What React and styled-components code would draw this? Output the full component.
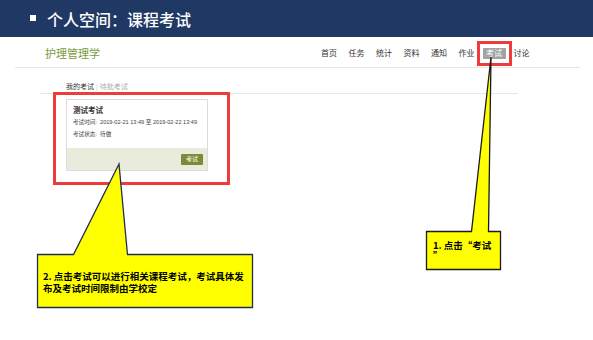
import styled, { createGlobalStyle } from "styled-components";

const GlobalStyle = createGlobalStyle`
  html, body {
    margin: 0;
    padding: 0;
    background: #fff;
  }
  body {
    font-family: "Liberation Sans", "Noto Sans CJK SC", sans-serif;
    color: #333;
  }
`;

const Page = styled.div`
  position: relative;
  width: 593px;
  height: 340px;
  overflow: hidden;
  background: #fff;
`;

const Header = styled.header`
  height: 37px;
  background: #1f3864;
  display: flex;
  align-items: center;
  padding-left: 30px;
  gap: 11px;
  box-sizing: border-box;
`;

const Bullet = styled.span`
  width: 6px;
  height: 6px;
  background: #fff;
  margin-top: -1px;
`;

const Title = styled.h1`
  margin: 0;
  font-size: 16px;
  font-weight: 500;
  color: #fff;
  font-family: "Noto Sans CJK SC", sans-serif;
`;

const NavBar = styled.nav`
  height: 31px;
  margin: 0 13px 0 15px;
  padding: 0 47px 0 30px;
  display: flex;
  align-items: center;
  justify-content: space-between;
  border-bottom: 1px solid #e6e6e6;
  box-sizing: border-box;
`;

const Brand = styled.div`
  font-size: 11px;
  color: #7b9a3c;
  padding-top: 2px;
`;

const Menu = styled.ul`
  list-style: none;
  margin: 0;
  padding: 2px 0 0;
  display: flex;
  gap: 4.5px;
`;

const MenuItem = styled.li`
  position: relative;
  height: 11px;
  line-height: 11px;
  padding: 0 3.5px;
  font-size: 8px;
  color: ${(p) => (p.$active ? "#fff" : "#333")};
  background: ${(p) => (p.$active ? "#a3a3a3" : "transparent")};

  &::after {
    content: "";
    display: ${(p) => (p.$highlight ? "block" : "none")};
    position: absolute;
    left: -6px;
    right: -6px;
    top: -7px;
    bottom: -7px;
    border: 3px solid #ef3b3b;
  }
`;

const Content = styled.main`
  margin-left: 40px;
  width: 478px;
  padding-top: 12px;
`;

const Tabs = styled.div`
  height: 13px;
  line-height: 13px;
  padding-left: 26px;
  font-size: 7px;
  border-bottom: 1px solid #e6e6e6;
  display: flex;
  gap: 2px;
`;

const Tab = styled.span`
  color: ${(p) => (p.$active ? "#333" : "#aaa")};
`;

const Divider = styled.span`
  color: #ccc;
`;

const CardList = styled.div`
  padding: 5px 0 0 26px;
`;

const Highlight = styled.div`
  position: relative;
  display: inline-block;

  &::after {
    content: "";
    position: absolute;
    left: -13px;
    top: -7px;
    right: -22px;
    bottom: -14px;
    border: 3px solid #ef3b3b;
  }
`;

const Card = styled.div`
  width: 142px;
  border: 1px solid #dcdcdc;
  box-sizing: border-box;
  background: #fff;
`;

const CardBody = styled.div`
  padding: 6px 6px 8px;
  height: 48px;
  box-sizing: border-box;
`;

const CardTitle = styled.div`
  font-size: 7.5px;
  font-weight: 700;
  line-height: 10px;
  color: #333;
`;

const InfoLine = styled.div`
  font-size: 5.6px;
  line-height: 12px;
  color: #444;
  white-space: nowrap;
`;

const CardFooter = styled.div`
  height: 22px;
  background: #e9ecdc;
  display: flex;
  justify-content: flex-end;
  align-items: center;
  padding-right: 4px;
`;

const ExamButton = styled.button`
  width: 22px;
  height: 11px;
  padding: 0;
  border: none;
  border-radius: 1px;
  background: #7a8c36;
  color: #fff;
  font-size: 6px;
  line-height: 11px;
  font-family: inherit;
`;

const Overlay = styled.svg`
  position: absolute;
  left: 0;
  top: 0;
  pointer-events: none;
  z-index: 5;
`;

const CalloutText = styled.div`
  position: absolute;
  z-index: 6;
  left: ${(p) => p.$left}px;
  top: ${(p) => p.$top}px;
  width: ${(p) => p.$width}px;
  font-family: "Noto Sans CJK SC", sans-serif;
  font-size: ${(p) => p.$size}px;
  line-height: ${(p) => p.$lh}px;
  font-weight: 700;
  color: #000;
  line-break: anywhere;
`;

const menu = ["首页", "任务", "统计", "资料", "通知", "作业", "考试", "讨论"];

export default function App() {
  return (
    <Page>
      <GlobalStyle />
      <Header>
        <Bullet />
        <Title>个人空间：课程考试</Title>
      </Header>
      <NavBar>
        <Brand>护理管理学</Brand>
        <Menu>
          {menu.map((m) => (
            <MenuItem key={m} $active={m === "考试"} $highlight={m === "考试"}>
              {m}
            </MenuItem>
          ))}
        </Menu>
      </NavBar>
      <Content>
        <Tabs>
          <Tab $active>我的考试</Tab>
          <Divider>|</Divider>
          <Tab>待批考试</Tab>
        </Tabs>
        <CardList>
          <Highlight>
            <Card>
              <CardBody>
                <CardTitle>测试考试</CardTitle>
                <InfoLine>考试时间:&nbsp; 2019-02-21 13:49 至 2019-02-22 13:49</InfoLine>
                <InfoLine>考试状态:&nbsp; 待做</InfoLine>
              </CardBody>
              <CardFooter>
                <ExamButton>考试</ExamButton>
              </CardFooter>
            </Card>
          </Highlight>
        </CardList>
      </Content>

      <Overlay width="593" height="340" viewBox="0 0 593 340">
        <path
          d="M426.5 231.5 L471.5 231.5 L491 57 L488.5 231.5 L500.5 231.5 L500.5 269.5 L426.5 269.5 Z"
          fill="#ffff00"
          stroke="#1a1a1a"
          strokeWidth="1.3"
        />
        <path
          d="M37.5 254.5 L73.5 254.5 L119 164 L127.5 254.5 L252.5 254.5 L252.5 307.5 L37.5 307.5 Z"
          fill="#ffff00"
          stroke="#1f2d5a"
          strokeWidth="1.3"
        />
      </Overlay>
      <CalloutText $left={433} $top={240} $width={62} $size={9.5} $lh={10}>
        1. 点击“考试”
      </CalloutText>
      <CalloutText $left={43} $top={270} $width={203} $size={9.5} $lh={12}>
        2. 点击考试可以进行相关课程考试，考试具体发布及考试时间限制由学校定
      </CalloutText>
    </Page>
  );
}
